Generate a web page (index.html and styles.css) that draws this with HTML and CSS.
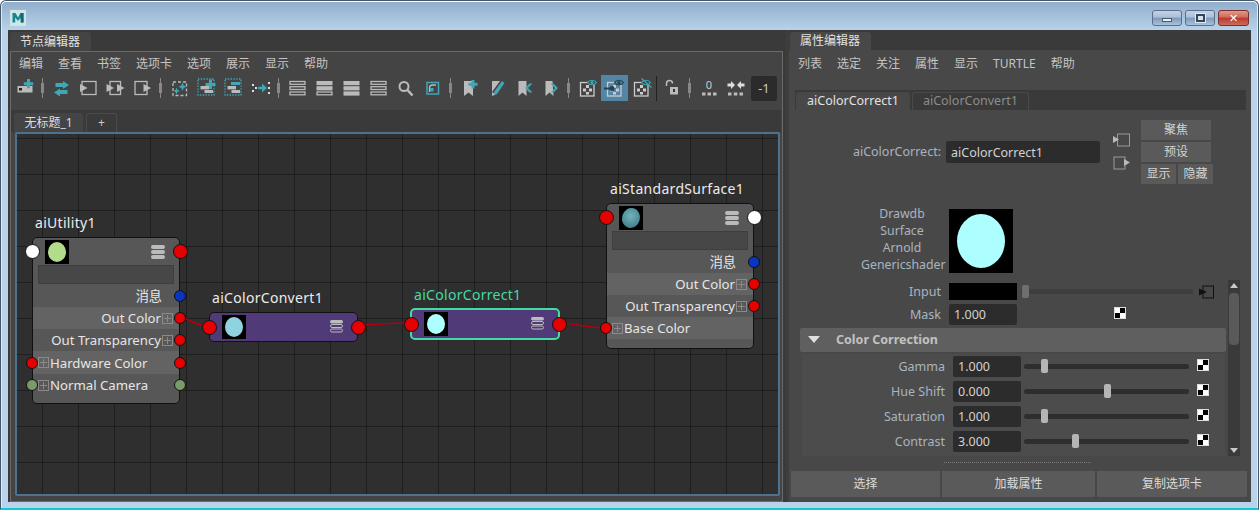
FILE: index.html
```html
<!DOCTYPE html>
<html lang="zh">
<head>
<meta charset="utf-8">
<title>Hypershade</title>
<link rel="stylesheet" href="styles.css">
</head>
<body>
<svg class="defs" width="0" height="0">
  <symbol id="io-l" viewBox="0 1 27 26"><rect x="7" y="7.500" width="14" height="13" fill="none" stroke="#bbb" stroke-width="1.300"/><path d="M5 10l7.500 4-7.500 4z" fill="#bbb"/></symbol>
  <symbol id="io-b" viewBox="0 1 27 26"><rect x="8" y="7.500" width="10.500" height="13" fill="none" stroke="#bbb" stroke-width="1.300"/><path d="M4.500 10l7.500 4-7.500 4zM15 10l7.500 4-7.500 4z" fill="#bbb"/></symbol>
  <symbol id="io-r" viewBox="0 1 27 26"><rect x="6" y="7.500" width="12" height="13" fill="none" stroke="#bbb" stroke-width="1.300"/><path d="M14.500 10l7.500 4-7.500 4z" fill="#bbb"/></symbol>
  <symbol id="bars-o" viewBox="0 1 27 26"><g fill="none" stroke="#bbb" stroke-width="1.300"><rect x="6" y="7.500" width="15" height="2.800"/><rect x="6" y="12.700" width="15" height="2.800"/><rect x="6" y="18" width="15" height="2.800"/></g></symbol>
  <symbol id="bars-m" viewBox="0 1 27 26"><g fill="#bbb"><rect x="5.500" y="7" width="16" height="4.200"/><rect x="5.500" y="12.200" width="16" height="4.200"/></g><rect x="6" y="18" width="15" height="2.800" fill="none" stroke="#bbb" stroke-width="1.300"/></symbol>
  <symbol id="bars-f" viewBox="0 1 27 26"><g fill="#bbb"><rect x="5.500" y="7" width="16" height="4.200"/><rect x="5.500" y="12.200" width="16" height="4.200"/><rect x="5.500" y="17.400" width="16" height="4.200"/></g></symbol>
  <symbol id="dotbox" viewBox="0 0 27 26"><rect x="5" y="5" width="16" height="16" fill="none" stroke="#3fa7b5" stroke-width="1.300" stroke-dasharray="1.400 1.400"/><rect x="7.500" y="12" width="8.500" height="3.400" fill="#bbb"/><rect x="11.500" y="16" width="8.500" height="3" fill="#bbb"/></symbol>
  <symbol id="mini" viewBox="0 0 16 16"><g fill="#bbb"><rect x="1" y="1" width="14" height="4" rx="2"/><rect x="1" y="6" width="14" height="4" rx="2"/><rect x="1" y="11" width="14" height="4" rx="2"/></g></symbol>
  <symbol id="mini-o" viewBox="0 0 16 16"><g fill="none" stroke="#bbb"><rect x="1.500" y="5.500" width="12" height="3" rx="1.500"/><rect x="1.500" y="10" width="12" height="3" rx="1.500"/></g><rect x="1" y="1" width="13" height="3.400" rx="1.700" fill="#bbb"/></symbol>
  <symbol id="shade" viewBox="0 0 27 26"><rect x="6.500" y="8.500" width="13.500" height="13.500" fill="none" stroke="#ccc" stroke-width="1.300"/><g fill="#ccc"><rect x="12" y="11" width="3" height="3"/><rect x="9" y="14.500" width="3" height="3"/><rect x="15" y="14.500" width="3" height="3"/><rect x="12" y="18" width="3" height="2.500"/></g></symbol>
</svg>

<div class="window">
  <header class="titlebar">
    <svg class="logo" width="16" height="16" viewBox="0 0 16 16" aria-hidden="true"><rect width="16" height="16" fill="#cfe6e6"/><path d="M2.500 12.500V3h3l2.500 4.500L10.500 3h3v9.500h-2.700V7.500L8 11 5.200 7.500v5z" fill="#16878f"/><path d="M10.500 3h3v9.500h-2.700z" fill="#0d6a74"/></svg>
    <div class="winbtns">
      <span class="winbtn"><i class="glyph-min"></i></span>
      <span class="winbtn"><i class="glyph-max"></i></span>
      <span class="winbtn close">✕</span>
    </div>
  </header>

  <main class="workspace">
    <section class="left">
      <div class="panel-tabs"><span class="panel-tab">节点编辑器</span></div>
      <div class="frame">
        <nav class="menu"><span>编辑</span><span>查看</span><span>书签</span><span>选项卡</span><span>选项</span><span>展示</span><span>显示</span><span>帮助</span></nav>
        <div class="toolbar">
          <svg class="ti" viewBox="0 1 27 26"><rect x="6.500" y="12" width="15" height="6.500" fill="#bbb"/><rect x="8" y="14" width="3" height="2.500" fill="#222"/><path d="M16 5h3v3.200h3.200v3H19v3h-3v-3h-3.200v-3H16z" fill="#3fa7b5"/></svg>
          <i class="sep"></i>
          <svg class="ti" viewBox="0 1 27 26"><path d="M7.500 9H15V7l6 4-6 4v-2H7.500z" fill="#3fa7b5"/><path d="M19.500 16H12v-1.500L6 18.500l6 4V20h7.500z" fill="#3fa7b5"/></svg>
          <svg class="ti"><use href="#io-l"/></svg>
          <svg class="ti"><use href="#io-b"/></svg>
          <svg class="ti"><use href="#io-r"/></svg>
          <i class="sep"></i>
          <svg class="ti" viewBox="0 1 27 26"><rect x="7" y="8" width="13.500" height="13.500" fill="none" stroke="#bbb" stroke-width="1.300" stroke-dasharray="3 2"/><path d="M16.500 8.500l1.200 3 3 1.200-3 1.200-1.200 3-1.200-3-3-1.200 3-1.200zM10.500 13.500l1 2.500 2.500 1-2.500 1-1 2.500-1-2.500-2.500-1 2.500-1z" fill="#3fa7b5"/></svg>
          <svg class="ti" viewBox="0 1 27 26"><use href="#dotbox" width="27" height="26"/><path d="M16 5.500h3V9h3.500v3H19v3h-3v-3h-3.500V9H16z" fill="#3fa7b5"/></svg>
          <svg class="ti" viewBox="0 1 27 26"><use href="#dotbox" width="27" height="26"/><rect x="11" y="8" width="9" height="3" fill="#3fa7b5"/></svg>
          <svg class="ti" viewBox="0 1 27 26"><g fill="#ddd"><rect x="5" y="10" width="2" height="2"/><rect x="8" y="13" width="2" height="2"/><rect x="5" y="16" width="2" height="2"/><rect x="21" y="8" width="2" height="2"/><rect x="21" y="13" width="2" height="2"/><rect x="21" y="18" width="2" height="2"/></g><path d="M11 12.800h4V9.500l5 4.500-5 4.500v-3.200h-4z" fill="#3fa7b5"/></svg>
          <i class="sep"></i>
          <svg class="ti"><use href="#bars-o"/></svg>
          <svg class="ti"><use href="#bars-m"/></svg>
          <svg class="ti"><use href="#bars-f"/></svg>
          <svg class="ti"><use href="#bars-o"/></svg>
          <svg class="ti" viewBox="0 1 27 26"><circle cx="12" cy="12.500" r="4.500" fill="none" stroke="#bbb" stroke-width="2"/><path d="M15.500 16l5 5.500" stroke="#bbb" stroke-width="2.600"/></svg>
          <svg class="ti" viewBox="0 1 27 26"><rect x="8" y="8.500" width="11.500" height="11.500" fill="none" stroke="#3fa7b5" stroke-width="1.500"/><path d="M10.500 18v-4a3 3 0 013-3H17" fill="none" stroke="#bbb" stroke-width="1.300"/><rect x="11" y="14" width="3.500" height="3.500" fill="#3fa7b5"/></svg>
          <i class="sep"></i>
          <svg class="ti" viewBox="0 1 27 26"><path d="M8 7h9v15l-4.500-3.500L8 22z" fill="#bbb"/><path d="M15.500 6h3v2.800h3v3h-3v2.700h-3v-2.700h-3v-3h3z" fill="#3fa7b5"/></svg>
          <svg class="ti" viewBox="0 1 27 26"><path d="M9 7h8L9 18z" fill="#bbb"/><path d="M11 18L19 7l2.500 2L14 20l-3.500 1.500z" fill="#3fa7b5"/><path d="M9 22v-4l3 2.500z" fill="#bbb"/></svg>
          <svg class="ti" viewBox="0 1 27 26"><path d="M8.500 7h8v15l-4-3.500-4 3.500z" fill="#bbb"/><path d="M22.500 9.500L18 14l4.500 4.500h-3L15 14l4.500-4.500z" fill="#3fa7b5"/></svg>
          <svg class="ti" viewBox="0 1 27 26"><path d="M8.500 7h7l1 15-4-3.500-4 3.500z" fill="#bbb"/><path d="M13.500 9.500L18 14l-4.500 4.500h3L21 14l-4.500-4.500z" fill="#3fa7b5"/></svg>
          <i class="sep"></i>
          <svg class="ti" viewBox="0 1 27 26"><use href="#shade" width="27" height="26"/><path d="M13.500 8.500c2-3 7-3 9 0-2 3-7 3-9 0z" fill="#444" stroke="#3fa7b5" stroke-width="1.200"/><circle cx="18" cy="8.500" r="1.500" fill="#3fa7b5"/></svg>
          <svg class="ti on" viewBox="0 1 27 26"><use href="#shade" width="27" height="26"/><path d="M13.500 8.500c2-3 7-3 9 0-2 3-7 3-9 0z" fill="#5285a6" stroke="#27404c" stroke-width="1.200"/><circle cx="18" cy="8.500" r="1.500" fill="#27404c"/><path d="M3 14.500h7" stroke="#27404c" stroke-width="2"/><circle cx="11" cy="14.500" r="2.500" fill="#27404c"/></svg>
          <svg class="ti" viewBox="0 1 27 26"><use href="#shade" width="27" height="26"/><path d="M13.500 8.500c2-3 7-3 9 0-2 3-7 3-9 0z" fill="#444" stroke="#3fa7b5" stroke-width="1.200"/><path d="M13.500 4.500l10 9" stroke="#3fa7b5" stroke-width="1.200"/></svg>
          <i class="vline"></i>
          <svg class="ti" viewBox="0 1 27 26"><path d="M8.500 12V9.500a3 3 0 016 0" fill="none" stroke="#bbb" stroke-width="1.500"/><rect x="12" y="13" width="8" height="7.500" fill="#bbb"/><rect x="15" y="15" width="2" height="3" fill="#333"/></svg>
          <i class="sep"></i>
          <svg class="ti" viewBox="0 1 27 26"><text x="14" y="15" class="zero">0</text><g fill="#bbb"><rect x="7" y="18.500" width="3.500" height="3"/><rect x="12.500" y="18.500" width="3.500" height="3"/><rect x="18" y="18.500" width="3.500" height="3"/></g></svg>
          <svg class="ti" viewBox="0 1 27 26"><path d="M5.500 9.500h3.500V7l4 4-4 4v-2.500H5.500zM22.500 9.500H19V7l-4 4 4 4v-2.500h3.500z" fill="#ddd"/><g fill="#bbb"><rect x="6" y="18.500" width="3.500" height="3"/><rect x="11.800" y="18.500" width="3.500" height="3"/><rect x="17.500" y="18.500" width="3.500" height="3"/></g></svg>
          <span class="minus">-1</span>
        </div>
        <div class="doc-tabs"><span class="doc-tab">无标题_1</span><span class="doc-add">+</span></div>

        <div class="canvas">
          <svg class="wires" width="761" height="360" viewBox="0 0 761 360" aria-hidden="true">
            <g fill="none" stroke="#b4000e" stroke-width="1.600">
              <path d="M163 184c12 0 12 8 29 8"/>
              <path d="M340 191c20 0 30-2 54-2"/>
              <path d="M542 189c18 0 25 5 47 5"/>
            </g>
          </svg>

          <article class="node util">
            <div class="node-title">aiUtility1</div>
            <div class="head"><i class="port big white lft"></i><span class="thumb"><i class="blob green"></i></span><svg class="mini" width="16" height="16"><use href="#mini"/></svg><i class="port big red rgt"></i></div>
            <div class="field"></div>
            <div class="row end"><span class="cjk">消息</span><i class="port blue rgt"></i></div>
            <div class="row end hi"><span>Out Color</span><i class="plus"></i><i class="port red rgt"></i></div>
            <div class="row end"><span>Out Transparency</span><i class="plus"></i><i class="port red rgt"></i></div>
            <div class="row hi tall"><i class="port red lft"></i><i class="plus"></i><span>Hardware Color</span><i class="port red rgt"></i></div>
            <div class="row"><i class="port olive lft"></i><i class="plus"></i><span>Normal Camera</span><i class="port olive rgt"></i></div>
          </article>

          <article class="node pill convert">
            <div class="node-title">aiColorConvert1</div>
            <i class="port big red lft"></i><span class="thumb"><i class="blob sky"></i></span><svg class="mini" width="16" height="16"><use href="#mini-o"/></svg><i class="port big red rgt"></i>
          </article>

          <article class="node pill correct">
            <div class="node-title">aiColorCorrect1</div>
            <i class="port big red lft"></i><span class="thumb"><i class="blob aqua"></i></span><svg class="mini" width="16" height="16"><use href="#mini-o"/></svg><i class="port big red rgt"></i>
          </article>

          <article class="node surface">
            <div class="node-title">aiStandardSurface1</div>
            <div class="head"><i class="port big red lft"></i><span class="thumb"><i class="blob ball"></i></span><svg class="mini" width="16" height="16"><use href="#mini"/></svg><i class="port big white rgt"></i></div>
            <div class="field"></div>
            <div class="row end"><span class="cjk">消息</span><i class="port blue rgt"></i></div>
            <div class="row end hi"><span>Out Color</span><i class="plus"></i><i class="port red rgt"></i></div>
            <div class="row end"><span>Out Transparency</span><i class="plus"></i><i class="port red rgt"></i></div>
            <div class="row hi"><i class="port red lft"></i><i class="plus"></i><span>Base Color</span></div>
          </article>
        </div>
      </div>
    </section>

    <section class="right">
      <div class="panel-tabs ae"><span class="panel-tab">属性编辑器</span></div>
      <nav class="menu ae-menu"><span>列表</span><span>选定</span><span>关注</span><span>属性</span><span>显示</span><span>TURTLE</span><span>帮助</span></nav>
      <div class="ae-tabs"><span class="ae-tab active">aiColorCorrect1</span><span class="ae-tab">aiColorConvert1</span></div>

      <div class="name-row">
        <label class="name-label">aiColorCorrect:</label>
        <span class="input name-input">aiColorCorrect1</span>
        <div class="io-icons">
          <svg width="18" height="14" viewBox="0 0 18 14"><rect x="4.500" y="1" width="12" height="12" fill="none" stroke="#999" stroke-width="1"/><path d="M0 3l6 3.500L0 10z" fill="#bbb"/></svg>
          <svg width="18" height="14" viewBox="0 0 18 14"><rect x="1" y="1" width="11" height="12" fill="none" stroke="#999" stroke-width="1"/><path d="M11 3l6 3.500L11 10z" fill="#bbb"/></svg>
        </div>
        <div class="name-btns">
          <span class="btn wide">聚焦</span>
          <span class="btn wide">预设</span>
          <div class="btn-pair"><span class="btn">显示</span><span class="btn">隐藏</span></div>
        </div>
      </div>

      <div class="swatch-row">
        <div class="swatch-label">Drawdb<br>Surface<br>Arnold<br>Genericshader</div>
        <div class="swatch"><i></i></div>
      </div>

      <div class="scrollarea">
        <div class="scroll-content">
          <div class="attr">
            <span class="attr-label">Input</span>
            <span class="color-box"></span>
            <div class="input-track"><i class="input-knob"></i></div>
            <svg class="link-icon" width="16" height="14" viewBox="0 0 16 14"><rect x="4" y="1" width="10.500" height="12" fill="none" stroke="#111" stroke-width="1"/><path d="M0 3.500l8 3.500-8 3.500z" fill="#111"/></svg>
          </div>
          <div class="attr mask">
            <span class="attr-label">Mask</span>
            <span class="input num">1.000</span>
            <i class="checker mask-check"></i>
          </div>
          <div class="section"><i class="tri"></i><span>Color Correction</span></div>
          <div class="sliders">
            <div class="slide"><span class="slide-label">Gamma</span><span class="input num">1.000</span><div class="track"><i style="left:12%"></i></div><i class="checker"></i></div>
            <div class="slide"><span class="slide-label">Hue Shift</span><span class="input num">0.000</span><div class="track"><i style="left:50%"></i></div><i class="checker"></i></div>
            <div class="slide"><span class="slide-label">Saturation</span><span class="input num">1.000</span><div class="track"><i style="left:12%"></i></div><i class="checker"></i></div>
            <div class="slide"><span class="slide-label">Contrast</span><span class="input num">3.000</span><div class="track"><i style="left:31%"></i></div><i class="checker"></i></div>
          </div>
        </div>
        <div class="scrollbar"><i class="up"></i><i class="bar"></i><i class="down"></i></div>
      </div>

      <div class="dots"></div>
      <div class="actions"><span class="act a1">选择</span><span class="act a2">加载属性</span><span class="act a3">复制选项卡</span></div>
    </section>
  </main>
</div>
</body>
</html>
```
FILE: styles.css
```css
* { box-sizing: border-box; }
html, body { margin: 0; height: 100%; background: #fff; overflow: hidden; }
body { font: 13px/1 "Noto Sans", "Noto Sans CJK SC", sans-serif; color: #c8c8c8; }
.defs { position: absolute; }

.window {
  width: 1259px; height: 510px; display: flex; flex-direction: column;
  border: 1px solid #44566a; border-bottom: 2px solid #12c8d8; border-radius: 6px 6px 0 0;
  background: linear-gradient(#91adcb 0, #b9d3ea 30px, #b9d3ea 100%);
  box-shadow: inset 0 1px 0 #fff, inset 1px 0 0 #dfeaf4, inset -1px 0 0 #dfeaf4;
}
.titlebar { height: 29px; flex: none; display: flex; justify-content: space-between; padding: 9px 9px 0; }
.logo { display: block; }
.winbtns { display: flex; gap: 3px; height: 16px; }
.winbtn {
  width: 30px; height: 16px; border: 1px solid #5c708a; border-radius: 3px;
  background: linear-gradient(#c2d3e6 0, #a9bed7 45%, #7d97b7 50%, #a9c3dd 100%);
  display: flex; align-items: center; justify-content: center;
}
.winbtn.close { width: 31px; border-color: #7c2e2a; background: linear-gradient(#e09a8c 0, #cf6a58 45%, #b63a2c 50%, #cf6a58 100%); color: #fff; font-size: 11px; font-weight: 700; font-family: "DejaVu Sans", sans-serif; }
.glyph-min { width: 10px; height: 4px; background: #e6eef6; border: 1px solid #4a5a70; margin-top: 4px; }
.glyph-max { width: 9px; height: 8px; border: 2px solid #34455a; background: #d6e2ee; outline: 1px solid #dfe9f3; }

.workspace { flex: 1; display: flex; margin: 0 7px 6px; background: #3a3a3a; min-height: 0; }

.left { width: 778px; flex: none; display: flex; flex-direction: column; padding-left: 2px; }
.panel-tabs { height: 21px; flex: none; display: flex; align-items: flex-end; background: #3a3a3a; }
.panel-tab { height: 19px; padding: 0 11px 0 10px; display: flex; align-items: center; background: #444; border-radius: 3px 3px 0 0; color: #e2e2e2; font-size: 12px; }
.frame { flex: 1; width: 773px; display: flex; flex-direction: column; background: #444; border: 1px solid #6a6a6a; min-height: 0; padding-bottom: 5px; }
.menu { height: 22px; flex: none; display: flex; align-items: center; gap: 15px; padding: 1px 0 0 8px; color: #c4c4c4; font-size: 12px; }
.toolbar { height: 36px; flex: none; display: flex; align-items: flex-start; padding-top: 1px; background: #444; }
.ti { width: 27px; height: 26px; flex: none; display: block; }
.ti.on { background: #5285a6; }
.sep { width: 10px; height: 20px; margin-top: 3px; flex: none; display: block; position: relative; }
.sep::before { content: ""; position: absolute; left: 4px; top: 0; width: 1px; height: 20px; background: #888; }
.sep::after { content: ""; position: absolute; left: 3px; top: 5px; width: 3px; height: 10px; background: #888; }
.vline { width: 3px; height: 25px; margin-top: 1px; flex: none; display: block; position: relative; }
.vline::before { content: ""; position: absolute; left: 1px; top: 0; width: 1px; height: 25px; background: #222; }
.zero { font-size: 11px; fill: #ccc; text-anchor: middle; }
.minus { width: 26px; height: 25px; margin: 1px 0 0 2px; display: flex; align-items: center; justify-content: center; background: #2b2b2b; border-radius: 2px; color: #c8c8c8; font-size: 13px; }

.doc-tabs { height: 22px; flex: none; display: flex; align-items: flex-end; gap: 3px; background: #3a3a3a; padding-left: 3px; margin-right: 1px; }
.doc-tab { width: 69px; height: 19px; display: flex; align-items: center; justify-content: center; background: #444; border-radius: 3px 3px 0 0; color: #dcdcdc; font-size: 12px; }
.doc-add { width: 31px; height: 19px; display: flex; align-items: center; justify-content: center; border: 1px solid #4a4a4a; border-bottom: 0; border-radius: 3px 3px 0 0; color: #ccc; font-size: 12px; }

.canvas {
  position: relative; width: 765px; flex: 1; margin-left: 4px; border: 2px solid #4c7290; border-radius: 2px;
  background-color: #2f2f2f;
  background-image: linear-gradient(90deg, #1e1e1e 1px, transparent 1px), linear-gradient(#1e1e1e 1px, transparent 1px);
  background-size: 36px 36px; background-position: 25px 4px;
  overflow: hidden;
}
.wires { position: absolute; left: 0; top: 0; }

.node { position: absolute; background: #575757; border: 1px solid #111; border-radius: 5px; color: #e6e6e6; font-size: 13.200px; display: flex; flex-direction: column; }
.node-title { position: absolute; left: 2px; top: -25px; color: #ececec; font-size: 14px; letter-spacing: .3px; white-space: nowrap; line-height: 20px; }
.util { left: 15px; top: 103px; width: 148px; height: 167px; }
.surface { left: 589px; top: 69px; width: 148px; height: 146px; }
.surface .node-title { left: 3px; }
.head { height: 27px; flex: none; position: relative; display: flex; align-items: center; justify-content: space-between; padding: 0 13px 0 12px; }
.thumb { width: 24px; height: 24px; background: #000; display: flex; align-items: center; justify-content: center; flex: none; }
.blob { width: 18px; height: 20px; border-radius: 50%; display: block; }
.green { background: #b1dc8b; }
.sky { background: #8fd2e0; }
.aqua { background: #adffff; }
.ball { background: radial-gradient(circle at 45% 40%, #6fb4bd, #3b6e78); transform: rotate(15deg); }
.mini { flex: none; }
.field { height: 19px; flex: none; margin: 0 5px 1px; background: #474747; border: 1px solid #3e3e3e; }
.row { height: 22px; flex: none; position: relative; display: flex; align-items: center; padding: 0 5px 0 4px; white-space: nowrap; }
.row > span { padding-top: 2px; }
.row.tall { height: 23px; }
.row.end { justify-content: flex-end; }
.row.hi { background: #636363; }
.row .cjk { margin-right: 12px; }
.plus { width: 11px; height: 11px; margin: 0 1px; flex: none; border: 1px solid #8a8a8a; background: linear-gradient(#8a8a8a, #8a8a8a) center/7px 1px no-repeat, linear-gradient(#8a8a8a, #8a8a8a) center/1px 7px no-repeat; }

.port { position: absolute; top: 50%; width: 12px; height: 12px; margin-top: -6px; border-radius: 50%; border: 1px solid #111; display: block; }
.port.big { width: 15px; height: 15px; margin-top: -7.500px; }
.port.lft { left: -7px; }
.port.rgt { right: -7px; }
.port.big.lft { left: -8.500px; }
.port.big.rgt { right: -8.500px; }
.red { background: #e60000; }
.white { background: #fff; }
.blue { background: #0a35c0; }
.olive { background: #7a9a6a; }

.pill { flex-direction: row; align-items: center; justify-content: space-between; background: #503a78; padding: 0 12px; }
.convert { left: 192px; top: 178px; width: 149px; height: 30px; }
.correct { left: 393px; top: 174px; width: 150px; height: 32px; border: 2px solid #43dca4; }
.correct .node-title { color: #43dca4; left: 2px; }

.right { flex: 1; display: flex; flex-direction: column; min-width: 0; background: #484848; border-left: 3px solid #3e3e3e; }
.panel-tabs.ae { padding-left: 1px; height: 20px; flex: none; }
.ae .panel-tab { height: 18px; background: #484848; }
.ae-menu { height: 26px; padding-left: 9px; }
.ae-tabs { height: 20px; flex: none; margin: 14px 5px 0 6px; background: #3a3a3a; display: flex; align-items: flex-end; gap: 2px; padding-left: 1px; }
.ae-tab { height: 18px; padding: 0 10px; display: flex; align-items: center; color: #8c8c8c; border: 1px solid #4a4a4a; border-bottom: 0; border-radius: 3px 3px 0 0; font-size: 12.500px; }
.ae-tab.active { background: #484848; color: #e2e2e2; border-color: #484848; }

.name-row { height: 64px; flex: none; margin-top: 10px; display: flex; }
.name-label { width: 157px; padding-right: 5px; padding-top: 26px; text-align: right; color: #a8b4c0; font-size: 12.500px; }
.input { background: #2c2c2c; border-radius: 2px; color: #d2d2d2; display: flex; align-items: center; padding: 2px 0 0 5px; font-size: 12.500px; }
.name-input { width: 154px; height: 22px; margin-top: 21px; }
.io-icons { width: 41px; padding: 13px 0 0 13px; display: flex; flex-direction: column; gap: 9px; }
.io-icons svg { display: block; }
.name-btns { width: 72px; display: flex; flex-direction: column; gap: 2px; }
.btn { height: 20px; flex: none; background: #5a5a5a; display: flex; align-items: center; justify-content: center; color: #d4d4d4; font-size: 12px; }
.btn.wide { width: 70px; }
.btn-pair { display: flex; gap: 2px; }
.btn-pair .btn { width: 35px; }

.swatch-row { display: flex; height: 64px; flex: none; margin-top: 25px; }
.swatch-label { width: 160px; padding: 0 6px 0 72px; text-align: center; color: #a8b4c0; font-size: 12.300px; line-height: 17px; margin-top: -4px; white-space: nowrap; }
.swatch { width: 64px; height: 64px; background: #000; display: flex; align-items: center; justify-content: center; }
.swatch i { width: 48px; height: 54px; border-radius: 50%; background: #adffff; display: block; }

.scrollarea { height: 176px; flex: none; margin-top: 7px; margin-left: 11px; display: flex; gap: 2px; }
.scroll-content { width: 426px; flex: none; padding-top: 3px; }
.attr { height: 17px; display: flex; align-items: center; }
.attr-label { width: 141px; flex: none; text-align: right; color: #a8b4c0; font-size: 12.500px; margin-right: 8px; padding-top: 2px; }
.color-box { width: 68px; height: 17px; background: #000; flex: none; }
.input-track { width: 172px; height: 5px; margin-left: 4px; background: #3e3e3e; position: relative; flex: none; }
.input-knob { position: absolute; left: 1px; top: -4px; width: 7px; height: 13px; border-radius: 2px; background: #6f6f6f; display: block; }
.link-icon { margin-left: 6px; flex: none; }
.attr.mask { height: 21px; margin-top: 4px; }
.num { width: 68px; height: 21px; flex: none; }
.checker { width: 12px; height: 12px; flex: none; display: block; border: 1px solid #ddd; background: conic-gradient(#000 25%, #fff 0 50%, #000 0 75%, #fff 0); }
.mask-check { margin-left: 97px; margin-top: -4px; }
.section { height: 24px; margin-top: 3px; background: #5f5f5f; border-radius: 2px; display: flex; align-items: center; padding: 1px 0 0 8px; color: #c2c2c2; font-weight: 700; font-size: 12.500px; }
.tri { width: 0; height: 0; border: 6.500px solid transparent; border-top: 7px solid #e0e0e0; border-bottom: 0; margin: -2px 16px 0 0; }
.sliders { height: 102px; margin: 2px 1px 0 2px; background: #4c4c4c; }
.slide { height: 25px; display: flex; align-items: center; }
.slide-label { width: 143px; flex: none; text-align: right; color: #a8b4c0; font-size: 12.500px; margin-right: 8px; padding-top: 2px; }
.track { width: 165px; height: 5px; margin-left: 3px; border-radius: 3px; background: #2e2e2e; position: relative; flex: none; }
.track i { position: absolute; top: -5px; margin-left: -3px; width: 7px; height: 14px; border-radius: 2px; background: #b5b5b5; display: block; }
.slide .checker { margin-left: 8px; margin-top: -4px; }
.scrollbar { width: 12px; flex: none; background: #3a3a3a; display: flex; flex-direction: column; align-items: center; position: relative; }
.scrollbar .up { margin-top: 3px; width: 0; height: 0; border: 4.500px solid transparent; border-bottom: 5px solid #c8c8c8; border-top: 0; }
.scrollbar .bar { margin-top: 5px; width: 10px; height: 52px; border-radius: 4px; background: #5a5a5a; display: block; }
.scrollbar .down { position: absolute; bottom: 3px; width: 0; height: 0; border: 4.500px solid transparent; border-top: 5px solid #c8c8c8; border-bottom: 0; }

.dots { height: 1px; width: 148px; margin: 6px 0 0 155px; flex: none; background: repeating-linear-gradient(90deg, #787878 0 1px, transparent 1px 2px); }
.actions { display: flex; gap: 2px; margin: 8px 0 0 2px; height: 26px; flex: none; }
.act { background: #5a5a5a; display: flex; align-items: center; justify-content: center; color: #dcdcdc; font-size: 12px; }
.a1 { width: 149px; }
.a2 { width: 153px; }
.a3 { width: 150px; }
```
